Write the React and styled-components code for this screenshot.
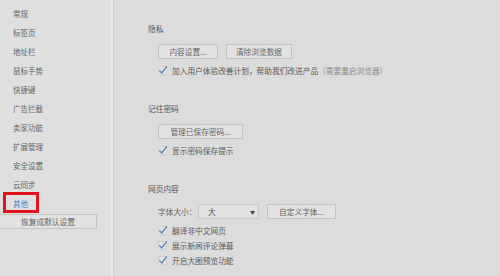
import styled, { createGlobalStyle } from "styled-components";

const GlobalStyle = createGlobalStyle`
  html, body {
    margin: 0;
    padding: 0;
    background: #dcdcdc;
  }
  body {
    font-family: "Noto Sans CJK SC", "Noto Sans", sans-serif;
    font-size: 7.7px;
    color: #5a5a5a;
  }
`;

const menu = [
  "常规",
  "标签页",
  "地址栏",
  "鼠标手势",
  "快捷键",
  "广告拦截",
  "卖家功能",
  "扩展管理",
  "安全设置",
  "云同步",
  "其他",
];

const Check = () => (
  <svg width="10" height="10" viewBox="0 0 10 10">
    <rect x="0.5" y="1.5" width="8" height="8" fill="#e2e2e2" stroke="#cdcdcd" strokeWidth="0.8" />
    <path d="M1.6 5.6 L3.8 8 L8.6 1.6" fill="none" stroke="#5d83b8" strokeWidth="1.3" strokeLinecap="round" strokeLinejoin="round" />
  </svg>
);

const App = () => {
  return (
    <>
      <GlobalStyle />
      <Page>
        <Sidebar>
          {menu.map((item) => (
            <MenuItem key={item} $active={item === "其他"}>
              {item}
            </MenuItem>
          ))}
          <ResetButton>恢复成默认设置</ResetButton>
        </Sidebar>
        <Divider />
        <Main>
          <Section>
            <Title>隐私</Title>
            <Body>
              <ButtonRow>
                <Button $width={60}>内容设置...</Button>
                <Button $width={66}>清除浏览数据</Button>
              </ButtonRow>
              <CheckRow>
                <Check />
                <span>
                  加入用户体验改善计划，帮助我们改进产品<Hint>（需要重启浏览器）</Hint>
                </span>
              </CheckRow>
            </Body>
          </Section>

          <Section>
            <Title>记住密码</Title>
            <Body>
              <ButtonRow>
                <Button $width={85}>管理已保存密码...</Button>
              </ButtonRow>
              <CheckRow>
                <Check />
                <span>显示密码保存提示</span>
              </CheckRow>
            </Body>
          </Section>

          <Section>
            <Title>网页内容</Title>
            <Body>
              <ButtonRow>
                <Field>
                  <FieldLabel>字体大小：</FieldLabel>
                  <Select>
                    <span>大</span>
                    <Arrow>▼</Arrow>
                  </Select>
                </Field>
                <Button $width={69}>自定义字体...</Button>
              </ButtonRow>
              <CheckList>
                <CheckRow>
                  <Check />
                  <span>翻译非中文网页</span>
                </CheckRow>
                <CheckRow>
                  <Check />
                  <span>展示新闻评论弹幕</span>
                </CheckRow>
                <CheckRow>
                  <Check />
                  <span>开启大图预览功能</span>
                </CheckRow>
              </CheckList>
            </Body>
          </Section>
        </Main>
      </Page>
    </>
  );
};

export default App;

const Page = styled.div`
  width: 500px;
  height: 276px;
  display: flex;
  overflow: hidden;
  background: #dcdcdc;
`;

const Sidebar = styled.div`
  width: 111px;
  flex-shrink: 0;
  padding-top: 4px;
  display: flex;
  flex-direction: column;
  background: #dfdfdf;
`;

const MenuItem = styled.div`
  position: relative;
  height: 19px;
  line-height: 19px;
  padding-left: 13px;
  font-size: 7.5px;
  color: ${(p) => (p.$active ? "#4d7fc4" : "#666")};

  ${(p) =>
    p.$active &&
    `
    &::after {
      content: "";
      position: absolute;
      left: 3px;
      top: -2px;
      width: 30px;
      height: 15px;
      border: 3px solid #e0141f;
    }
  `}
`;

const ResetButton = styled.div`
  width: 96px;
  height: 13px;
  line-height: 13px;
  margin-top: 1px;
  text-align: center;
  color: #666;
  background: #e1e1e1;
  border: 1px solid #c4c4c4;
  border-left: none;
`;

const Divider = styled.div`
  width: 2px;
  flex-shrink: 0;
  background: #e8e8e8;
  box-shadow: 1px 0 1px #d0d0d0;
`;

const Main = styled.div`
  flex: 1;
  padding: 23px 0 0 35px;
  display: flex;
  flex-direction: column;
  gap: 27px;
`;

const Section = styled.div`
  display: flex;
  flex-direction: column;
`;

const Title = styled.div`
  height: 12px;
  line-height: 12px;
  color: #555;
`;

const Body = styled.div`
  margin-top: 9px;
  padding-left: 10px;
  display: flex;
  flex-direction: column;
  gap: 5px;
`;

const ButtonRow = styled.div`
  display: flex;
  align-items: center;
  gap: 8px;
  height: 15px;
`;

const Button = styled.div`
  box-sizing: border-box;
  width: ${(p) => p.$width}px;
  height: 15px;
  line-height: 13px;
  text-align: center;
  color: #666;
  background: #e2e2e2;
  border: 1px solid #c3c3c3;
  white-space: nowrap;
`;

const Field = styled.div`
  display: flex;
  align-items: center;
  height: 15px;
`;

const FieldLabel = styled.span`
  width: 40px;
  white-space: nowrap;
  color: #666;
`;

const Select = styled.div`
  box-sizing: border-box;
  width: 61px;
  height: 15px;
  padding: 0 3px 0 9px;
  display: flex;
  align-items: center;
  justify-content: space-between;
  color: #555;
  background: #e1e1e1;
  border: 1px solid #cacaca;
`;

const Arrow = styled.span`
  font-size: 5px;
  color: #444;
`;

const CheckList = styled.div`
  display: flex;
  flex-direction: column;
  gap: 3px;
`;

const CheckRow = styled.div`
  height: 12px;
  display: flex;
  align-items: center;
  gap: 4px;
  color: #5a5a5a;
  white-space: nowrap;
`;

const Hint = styled.span`
  color: #8a8a8a;
`;
